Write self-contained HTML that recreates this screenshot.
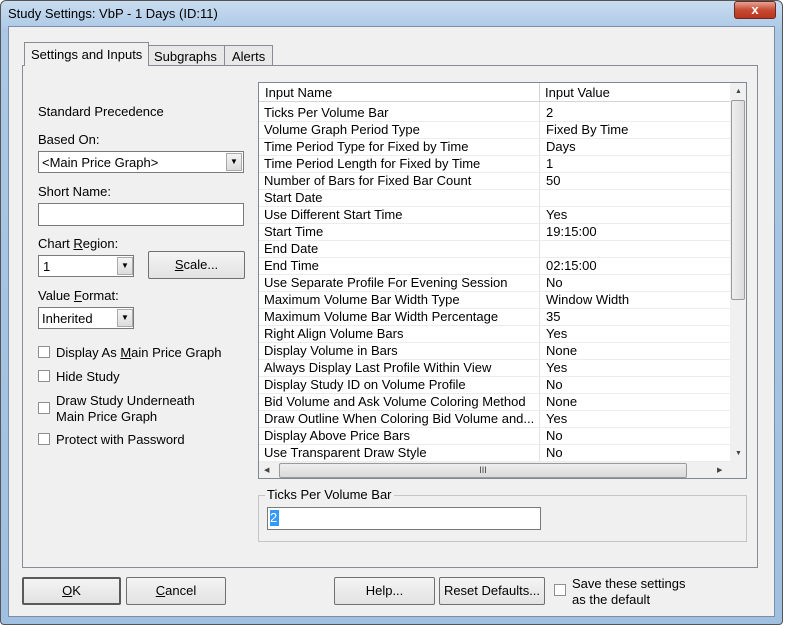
<!DOCTYPE html>
<html><head><style>
*{box-sizing:border-box;margin:0;padding:0}
body{width:800px;height:628px;background:#fff;font-family:"Liberation Sans",sans-serif;font-size:13px;color:#000;position:relative;overflow:hidden}
.a{position:absolute}
.win{left:0;top:0;width:783px;height:625px;border:1px solid #555;border-radius:6px 6px 4px 4px;background:linear-gradient(#c9dcef,#aac8e6 30px,#9fc0e0);}
.client{left:8px;top:26px;width:767px;height:591px;background:#f0f0f0;border:1px solid #7c8ea3}
.btn{position:absolute;background:linear-gradient(#f4f4f4,#e2e2e2);border:1px solid #707070;border-radius:2px;text-align:center;line-height:28px}
.cb{position:absolute;width:12px;height:12px;border:1px solid #8e8f8f;background:#fff}
.row{position:absolute;left:0;width:471px;height:17px;border-bottom:1px solid #ececec;line-height:16px}
.row span{position:absolute;left:5px}
.row b{font-weight:normal;position:absolute;left:287px}
u{text-decoration:underline}
</style></head><body>
<div class="a win"></div>
<div class="a" style="left:8px;top:6px;font-size:13px">Study Settings: VbP - 1 Days (ID:11)</div>
<div class="a" style="left:734px;top:1px;width:42px;height:18px;border:1px solid #6b2a20;border-radius:3px;background:linear-gradient(#e8a394,#c74a32 50%,#b83520);color:#fff;text-align:center;font-weight:bold;line-height:16px">x</div>
<div class="a client"></div>
<!-- tab panel -->
<div class="a" style="left:22px;top:65px;width:736px;height:503px;border:1px solid #898c95;background:#f0f0f0"></div>
<div class="a" style="left:24px;top:42px;width:125px;height:24px;border:1px solid #898c95;border-bottom:none;background:#f0f0f0;padding:4px 0 0 6px">Settings and Inputs</div>
<div class="a" style="left:149px;top:45px;width:76px;height:20px;border:1px solid #898c95;border-left:none;border-bottom:none;background:#e8e8e8;padding:3px 0 0 5px">Subgraphs</div>
<div class="a" style="left:225px;top:45px;width:48px;height:20px;border:1px solid #898c95;border-left:none;border-bottom:none;background:#e8e8e8;padding:3px 0 0 7px">Alerts</div>
<!-- left -->
<div class="a" style="left:38px;top:104px">Standard Precedence</div>
<div class="a" style="left:38px;top:132px">Based On:</div>
<div class="a" style="left:38px;top:151px;width:206px;height:22px;border:1px solid #7a7a7a;background:#fff;padding:3px 0 0 3px">&lt;Main Price Graph&gt;</div>
<div class="a" style="left:226px;top:153px;width:16px;height:18px;background:linear-gradient(#f4f4f4,#dcdcdc);border:1px solid #aaa;font-size:8px;text-align:center;line-height:16px">▼</div>
<div class="a" style="left:38px;top:184px">Short Name:</div>
<div class="a" style="left:38px;top:203px;width:206px;height:23px;border:1px solid #7a7a7a;background:#fff"></div>
<div class="a" style="left:38px;top:236px">Chart <u>R</u>egion:</div>
<div class="a" style="left:38px;top:255px;width:96px;height:22px;border:1px solid #7a7a7a;background:#fff;padding:3px 0 0 4px">1</div>
<div class="a" style="left:117px;top:257px;width:16px;height:18px;background:linear-gradient(#f4f4f4,#dcdcdc);border:1px solid #aaa;font-size:8px;text-align:center;line-height:16px">▼</div>
<div class="btn" style="left:148px;top:251px;width:97px;height:28px;line-height:26px"><u>S</u>cale...</div>
<div class="a" style="left:38px;top:288px">Value <u>F</u>ormat:</div>
<div class="a" style="left:38px;top:307px;width:96px;height:22px;border:1px solid #7a7a7a;background:#fff;padding:3px 0 0 3px">Inherited</div>
<div class="a" style="left:117px;top:309px;width:16px;height:18px;background:linear-gradient(#f4f4f4,#dcdcdc);border:1px solid #aaa;font-size:8px;text-align:center;line-height:16px">▼</div>
<div class="cb" style="left:38px;top:346px"></div><div class="a" style="left:56px;top:345px">Display As <u>M</u>ain Price Graph</div>
<div class="cb" style="left:38px;top:370px"></div><div class="a" style="left:56px;top:369px">Hide Study</div>
<div class="cb" style="left:38px;top:402px"></div><div class="a" style="left:56px;top:393px;line-height:16px">Draw Study Underneath<br>Main Price Graph</div>
<div class="cb" style="left:38px;top:433px"></div><div class="a" style="left:56px;top:432px">Protect with Password</div>
<!-- grid -->
<div class="a" style="left:258px;top:82px;width:489px;height:397px;border:1px solid #828790;background:#fff;overflow:hidden">
 <div class="a" style="left:0;top:0;width:471px;height:19px;border-bottom:1px solid #d5d5d5;background:#fff;line-height:19px">
  <span class="a" style="left:6px">Input Name</span><span class="a" style="left:286px">Input Value</span>
  <div class="a" style="left:280px;top:0;width:1px;height:19px;background:#d5d5d5"></div>
 </div>
 <div class="a" style="left:280px;top:19px;width:1px;height:360px;background:#e4e4e4"></div>
 <div class="a" style="left:0;top:22px;width:471px">
 <div class="row" style="top:0"><span>Ticks Per Volume Bar</span><b>2</b></div>
 <div class="row" style="top:17px"><span>Volume Graph Period Type</span><b>Fixed By Time</b></div>
 <div class="row" style="top:34px"><span>Time Period Type for Fixed by Time</span><b>Days</b></div>
 <div class="row" style="top:51px"><span>Time Period Length for Fixed by Time</span><b>1</b></div>
 <div class="row" style="top:68px"><span>Number of Bars for Fixed Bar Count</span><b>50</b></div>
 <div class="row" style="top:85px"><span>Start Date</span><b></b></div>
 <div class="row" style="top:102px"><span>Use Different Start Time</span><b>Yes</b></div>
 <div class="row" style="top:119px"><span>Start Time</span><b>19:15:00</b></div>
 <div class="row" style="top:136px"><span>End Date</span><b></b></div>
 <div class="row" style="top:153px"><span>End Time</span><b>02:15:00</b></div>
 <div class="row" style="top:170px"><span>Use Separate Profile For Evening Session</span><b>No</b></div>
 <div class="row" style="top:187px"><span>Maximum Volume Bar Width Type</span><b>Window Width</b></div>
 <div class="row" style="top:204px"><span>Maximum Volume Bar Width Percentage</span><b>35</b></div>
 <div class="row" style="top:221px"><span>Right Align Volume Bars</span><b>Yes</b></div>
 <div class="row" style="top:238px"><span>Display Volume in Bars</span><b>None</b></div>
 <div class="row" style="top:255px"><span>Always Display Last Profile Within View</span><b>Yes</b></div>
 <div class="row" style="top:272px"><span>Display Study ID on Volume Profile</span><b>No</b></div>
 <div class="row" style="top:289px"><span>Bid Volume and Ask Volume Coloring Method</span><b>None</b></div>
 <div class="row" style="top:306px"><span>Draw Outline When Coloring Bid Volume and...</span><b>Yes</b></div>
 <div class="row" style="top:323px"><span>Display Above Price Bars</span><b>No</b></div>
 <div class="row" style="top:340px"><span>Use Transparent Draw Style</span><b>No</b></div>
 </div>
 <!-- vscroll -->
 <div class="a" style="left:471px;top:0;width:17px;height:379px;background:#f0f0f0;font-size:7px;color:#444;text-align:center">
  <div style="height:17px;line-height:17px">▲</div>
  <div class="a" style="left:1px;top:17px;width:14px;height:200px;border:1px solid #9a9a9a;border-radius:2px;background:linear-gradient(90deg,#eee,#dcdcdc)"></div>
  <div class="a" style="left:0;top:362px;width:17px;line-height:17px">▼</div>
 </div>
 <!-- hscroll -->
 <div class="a" style="left:0;top:379px;width:488px;height:17px;background:#f0f0f0;font-size:7px;color:#444">
  <div class="a" style="left:5px;top:4px">◀</div>
  <div class="a" style="left:20px;top:1px;width:408px;height:15px;border:1px solid #9a9a9a;border-radius:2px;background:linear-gradient(#eee,#dadada);text-align:center;line-height:12px;font-size:9px">III</div>
  <div class="a" style="left:458px;top:4px">▶</div>
 </div>
</div>
<!-- group box -->
<div class="a" style="left:258px;top:495px;width:489px;height:47px;border:1px solid #c5c5c5"></div>
<div class="a" style="left:265px;top:487px;background:#f0f0f0;padding:0 2px">Ticks Per Volume Bar</div>
<div class="a" style="left:267px;top:507px;width:274px;height:23px;border:1px solid #7a7a7a;background:#fff"></div>
<div class="a" style="left:270px;top:510px;width:9px;height:16px;background:#3399ff;color:#fff;line-height:16px">2</div>
<!-- buttons -->
<div class="btn" style="left:22px;top:577px;width:99px;height:28px;border:2px solid #5a5a5a;line-height:24px"><u>O</u>K</div>
<div class="btn" style="left:126px;top:577px;width:100px;height:28px;line-height:26px"><u>C</u>ancel</div>
<div class="btn" style="left:334px;top:577px;width:101px;height:28px;line-height:26px">Help...</div>
<div class="btn" style="left:439px;top:577px;width:106px;height:28px;line-height:26px">Reset Defaults...</div>
<div class="cb" style="left:554px;top:584px"></div>
<div class="a" style="left:572px;top:576px;line-height:16px">Save these settings<br>as the default</div>
</body></html>
